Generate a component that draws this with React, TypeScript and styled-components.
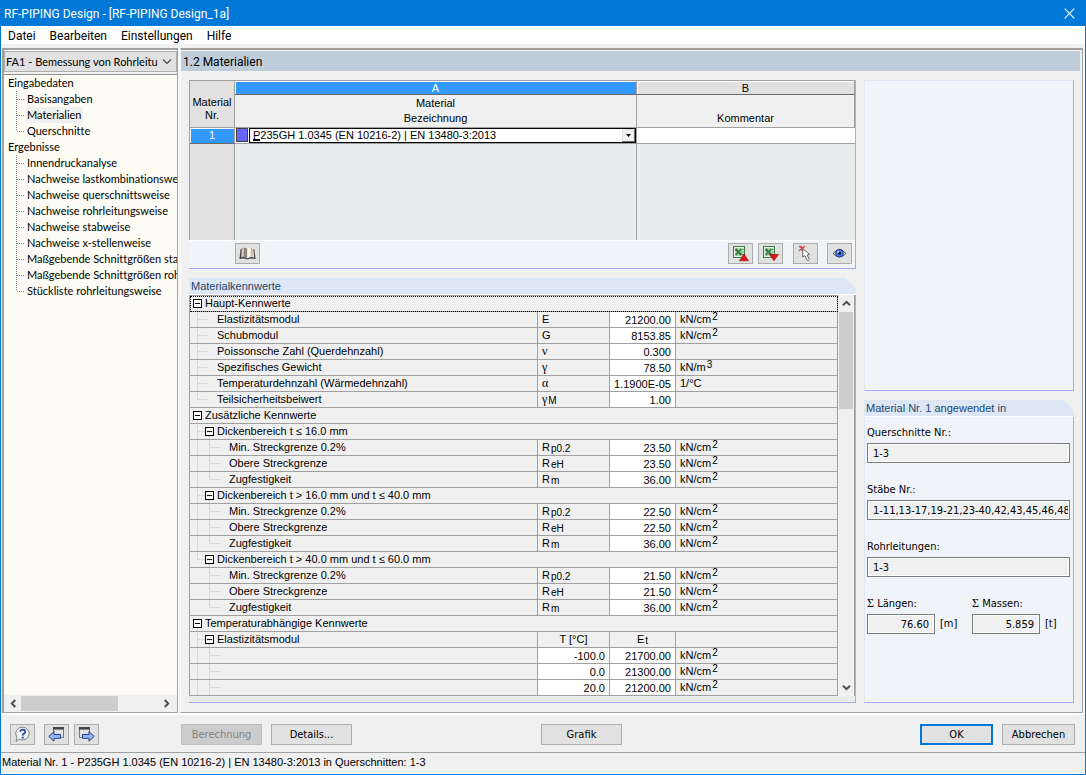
import React from "react";
import styled, { createGlobalStyle, css } from "styled-components";

const SYSTEM = '"DejaVu Sans Condensed", "DejaVu Sans", sans-serif';
const TREE = 'Lato, "Open Sans", sans-serif';
const GRID = '"Liberation Sans", Arial, sans-serif';
const CAPTION = 'Roboto, "Open Sans", sans-serif';
const SYMBOL = '"Liberation Serif", "Times New Roman", serif';

const GlobalStyle = createGlobalStyle`
  *, *::before, *::after { box-sizing: border-box; }
  body { margin: 0; background: #f0f0f0; color: #000; font: 11px/14px ${SYSTEM}; }
  button, select, input { font: inherit; color: inherit; margin: 0; padding: 0; border-radius: 0; }
  svg { display: block; flex: none; }
`;

/* ---------- window frame ---------- */

const Window = styled.div`
  display: flex;
  flex-direction: column;
  min-height: 100vh;
  border: 1px solid #0078d7;
  background: #f0f0f0;
`;

const TitleBar = styled.header`
  display: flex;
  align-items: center;
  justify-content: space-between;
  height: 25px;
  padding: 0 8px 0 3px;
  background: #0078d7;
  color: #fff;
  font: 12px/16px ${CAPTION};
`;

const CloseButton = styled.button`
  border: 0;
  padding: 2px;
  background: none;
`;

const MenuBar = styled.nav`
  display: flex;
  gap: 14px;
  height: 18px;
  margin-bottom: 4px;
  padding: 1px 7px 0;
  background: #fff;
  font: 12px/18px ${CAPTION};
`;

const MenuItem = styled.button`
  border: 0;
  height: 18px;
  background: none;
`;

const Workspace = styled.div`
  flex: 1;
  display: grid;
  grid-template-columns: 176px minmax(0, 1fr);
  gap: 2px;
  padding: 0 2px 0 1px;
  border-bottom: 2px solid #fff;
`;

/* ---------- navigator ---------- */

const Navigator = styled.aside`
  display: flex;
  flex-direction: column;
  min-width: 0;
  border: 1px solid #a0a0a0;
  border-width: 2px 1px 1px 2px;
  background: #fcfcf5;
  box-shadow: 1px 0 #fff;
  font-family: ${TREE};
  font-variant-ligatures: none;
`;

const CaseSelectBox = styled.div`
  display: flex;
  align-items: center;
  margin-top: 1px;
  border: 1px solid #adadad;
  background: #e1e1e1;
  height: 21px;
  box-shadow: 0 2px #f0f0f0, 0 3px #8f8f8f;
  margin-bottom: 3px;
`;

const CaseSelect = styled.select`
  flex: 1;
  min-width: 0;
  height: 19px;
  padding: 0 0 0 1px;
  border: 0;
  appearance: none;
  background: none;
  overflow: hidden;
  white-space: nowrap;
`;

const Tree = styled.ul`
  flex: 1;
  margin: 0;
  padding: 0;
  list-style: none;
  overflow: hidden;

  ul { margin: 0; padding: 0 0 0 12px; list-style: none; }
`;

const TreeItem = styled.li`
  display: flex;
  height: 16px;
`;

const TreeLink = styled.a<{ $selected?: boolean }>`
  padding: 0 2px 0 1px;
  color: #000;
  line-height: 16px;
  white-space: nowrap;
  text-decoration: none;
  background: ${(p) => (p.$selected ? "#f0f0f0" : "transparent")};
`;

const TreeRoot = styled(TreeLink)`
  display: block;
  padding-left: 4px;
`;

const HScroll = styled.div`
  display: flex;
  align-items: center;
  height: 17px;
  padding: 0 3px 0 1px;
  background: #f0f0f0;
`;

const ScrollButton = styled.button`
  display: grid;
  place-items: center;
  border: 0;
  width: 16px;
  height: 15px;
  background: none;
`;

const HTrack = styled.div`
  flex: 1;
  height: 15px;
`;

const HThumb = styled.div`
  width: 71%;
  height: 15px;
  background: #cdcdcd;
`;

/* ---------- main area ---------- */

const Main = styled.main`
  display: flex;
  flex-direction: column;
  min-width: 0;
  border: 1px solid #a0a0a0;
  border-top-width: 2px;
  border-left-color: #fff;
  box-shadow: 1px 0 #fff;
`;

const PageTitle = styled.h1`
  margin: 1px 2px 9px 0;
  height: 20px;
  padding: 0 2px;
  background: #bfcddb;
  font: 12px/22px ${CAPTION};
`;

const Columns = styled.div`
  flex: 1;
  display: grid;
  grid-template-columns: minmax(0, 1fr) 210px;
  gap: 8px;
  padding: 0 8px 9px 8px;
`;

const Stack = styled.div`
  display: flex;
  flex-direction: column;
  gap: 9px;
  min-width: 0;
`;

const Panel = styled.section<{ $grow?: boolean }>`
  display: flex;
  flex-direction: column;
  border: 1px solid #a8a8ec;
  border-width: 0 1px 1px 0;
  background: #f0f4f9;
  ${(p) => p.$grow && css`flex: 1;`}
`;

const Preview = styled(Panel)`
  height: 311px;
  border-top: 1px solid #dce6f5;
  border-left: 1px solid #dce6f5;
`;

const TitledPanel = styled(Panel)`
  border-right-color: transparent;
  background: linear-gradient(#a8a8ec, #a8a8ec) right 10px / 1px 100% no-repeat border-box, #f0f4f9;
  background-origin: border-box;
`;

const PanelTitle = styled.h2`
  height: 17px;
  margin: 0 -1px 0 0;
  padding: 0 2px;
  border-bottom: 1px solid #fff;
  background: linear-gradient(45deg, #dce6f5 calc(100% - 8px), #f0f0f0 calc(100% - 7px));
  color: #1e466e;
  font: 11px/16px ${GRID};
`;

/* ---------- material table ---------- */

const MaterialTable = styled.table`
  width: 100%;
  table-layout: fixed;
  border-collapse: separate;
  border-spacing: 0;
  border: 1px solid #a0a0a0;
  border-width: 1px 0 0 1px;
  background: #f0f0f0;
  font: 11px/13px ${GRID};

  th, td { padding: 0; font-weight: normal; border-right: 1px solid #a0a0a0; }
  td:last-child { border-right: 0; }
`;

const CornerHead = styled.th`
  && { padding-top: 9px; }
  background: #e1e1e1;
  border-bottom: 1px solid #a0a0a0;
`;

const LetterHead = styled.th<{ $active?: boolean }>`
  height: 14px;
  line-height: 12px;
  border-bottom: 1px solid #696969;
  box-shadow: inset 1px 1px #fff;
  background: ${(p) => (p.$active ? "#3399ff" : "#e1e1e1")};
  color: ${(p) => (p.$active ? "#fff" : "#000")};
`;

const TextHead = styled.th`
  && { padding-bottom: 1px; }
  height: 33px;
  vertical-align: bottom;
  line-height: 15px;
  border-bottom: 1px solid #a0a0a0;
`;

const RowNumber = styled.th`
  height: 16px;
  background: #3399ff;
  color: #fff;
  border-bottom: 1px solid #696969;
  box-shadow: inset 1px 1px #fff;
`;

const EntryCell = styled.td`
  height: 16px;
  background: #fff;
  border-bottom: 1px solid #a0a0a0;
`;

const MaterialEntry = styled.div`
  position: relative;
  display: grid;
  grid-template-columns: 14px minmax(0, 1fr);
  height: 15px;
`;

const Swatch = styled.span`
  height: 14px;
  margin: 0 1px;
  border: 1px solid #404040;
  background: #6666ff;
`;

const MaterialSelectBox = styled.div`
  display: flex;
  align-items: center;
  height: 15px;
  border: 1px solid #000;
  background: #fff;
`;

const MaterialSelect = styled.select`
  flex: 1;
  min-width: 0;
  height: 13px;
  padding-left: 3px;
  border: 0;
  appearance: none;
  background: none;
  line-height: 13px;
`;

const DropArrow = styled.span`
  display: grid;
  place-items: center;
  width: 13px;
  height: 13px;
  border: 1px solid #e3e3e3;
  border-right-color: #696969;
  border-bottom-color: #696969;
  background: #f0f0f0;
`;

const Caret = styled.span`
  position: absolute;
  left: 18px;
  bottom: 2px;
  width: 7px;
  height: 2px;
  background: #000;
`;

const CommentInput = styled.input`
  display: block;
  width: 100%;
  height: 15px;
  border: 0;
  background: #fff;
`;

const EmptyCell = styled.td<{ $head?: boolean }>`
  height: 96px;
  background: ${(p) => (p.$head ? "#e1e1e1" : "#e8eeee")};
`;

const TableTools = styled.div`
  display: flex;
  gap: 5px;
  height: 28px;
  padding: 2px 3px 0 46px;
  border-top: 1px solid #fff;
`;

const ToolGroup = styled.div<{ $gap: number; $end?: boolean }>`
  display: flex;
  gap: ${(p) => p.$gap}px;
  margin-left: ${(p) => (p.$end ? "auto" : "0")};

  & + & { margin-left: ${(p) => (p.$end ? "auto" : "5px")}; }
`;

const IconButton = styled.button`
  display: grid;
  place-items: center;
  width: 25px;
  height: 21px;
  border: 1px solid #adadad;
  background: #e1e1e1;
`;

/* ---------- property grid ---------- */

const GridArea = styled.div`
  flex: 1;
  display: flex;
  padding-bottom: 6px;
  background: linear-gradient(#e8eeee, #e8eeee) bottom / 100% 6px no-repeat;
`;

const PropertyTable = styled.table`
  flex: 1;
  width: 100%;
  table-layout: fixed;
  border-collapse: separate;
  border-spacing: 0;
  border: 1px solid #a0a0a0;
  border-width: 1px 0 0 1px;
  background: #f0f0f0;
  font: 11px/15px ${GRID};

  td, th {
    height: 16px;
    padding: 0;
    font-weight: normal;
    text-align: left;
    white-space: nowrap;
    border-right: 1px solid #a0a0a0;
    border-bottom: 1px solid #a0a0a0;
  }
  tr > th[data-focus] { outline: 1px dotted #000; outline-offset: -1px; }
`;

const LabelBox = styled.div`
  display: flex;
  gap: 2px;
  height: 15px;
  padding-left: 1px;
`;

const TextCell = styled.td`
  && { padding-left: 4px; }
`;

const HeadCell = styled.td`
  && { text-align: center; }
`;

const ValueCell = styled.td`
  && {
    padding: 1px 4px 0 0;
    text-align: right;
    background: #fff;
    line-height: 14px;
  }
`;

const Sub = styled.sub`
  font-size: 10px;
  line-height: 0;
  vertical-align: -1px;
  margin-left: 1px;
`;

const Sup = styled.sup`
  font-size: 10px;
  line-height: 0;
  vertical-align: 3px;
  margin-left: 1px;
`;

const Greek = styled.span`
  font-family: ${SYMBOL};
  font-size: 12px;
  line-height: 0;
`;

const VScroll = styled.div`
  display: flex;
  flex-direction: column;
  width: 17px;
  padding: 0 1px;
  border-right: 1px solid #a0a0a0;
  background: #f0f0f0;
`;

const VButton = styled(ScrollButton)`
  width: 15px;
  height: 17px;
`;

const VTrack = styled.div`
  flex: 1;
`;

const VThumb = styled.div`
  height: 97px;
  background: #cdcdcd;
`;

/* ---------- usage panel ---------- */

const UsageForm = styled.div`
  flex: 1;
  display: flex;
  flex-direction: column;
  gap: 20px;
  padding: 9px 3px 0 2px;
  border-left: 1px solid #dce6f5;
`;

const Field = styled.div`
  display: flex;
  flex-direction: column;
  gap: 3px;
`;

const FieldPair = styled.div`
  display: grid;
  grid-template-columns: 105px 1fr;
`;

const FieldLine = styled.div`
  display: flex;
  align-items: center;
  gap: 5px;
`;

const ReadOnly = styled.input<{ $small?: boolean }>`
  width: ${(p) => (p.$small ? "68px" : "100%")};
  height: 20px;
  padding: ${(p) => (p.$small ? "0 5px" : "0 1px 0 5px")};
  border: 1px solid #7a7a7a;
  box-shadow: inset 0 0 0 1px #fff;
  background: #f0f0f0;
  text-align: ${(p) => (p.$small ? "right" : "left")};
`;

/* ---------- bottom ---------- */

const CommandBar = styled.footer`
  display: flex;
  align-items: flex-start;
  gap: 9px;
  height: 37px;
  padding: 9px 10px 0 9px;
`;

const CommandButton = styled.button`
  width: 81px;
  height: 21px;
  border: 1px solid #adadad;
  background: #e1e1e1;

  &:disabled { background: #cccccc; border-color: #bfbfbf; color: #838383; }
`;

const IconStrip = styled.div`
  display: flex;
  gap: 5px;
  width: 162px;
`;

const HelpSlot = styled.div`
  margin-right: 4px;
`;

const GraphicSlot = styled.div`
  margin-left: 180px;
`;

const DialogActions = styled.div`
  display: flex;
  gap: 9px;
  margin-left: auto;
`;

const DialogButton = styled(CommandButton)<{ $primary?: boolean }>`
  width: 73px;
  ${(p) => p.$primary && css`border: 2px solid #0078d7;`}
`;

const StatusBar = styled.div`
  height: 22px;
  border-top: 1px solid #a0a0a0;
  border-bottom: 1px solid #fff;
  padding-left: 1px;
  font: 11px/19px ${GRID};
  white-space: nowrap;
  overflow: hidden;
`;

/* ---------- drawings ---------- */

const Chevron = ({ dir }: { dir: "up" | "down" | "left" | "right" }) => {
  const turn = { up: 0, right: 90, down: 180, left: 270 }[dir];
  return (
    <svg width="9" height="9" viewBox="0 0 9 9">
      <path d="M1 6.3 4.5 2.8 8 6.3" fill="none" stroke="#505050" strokeWidth="2" transform={`rotate(${turn} 4.5 4.5)`} />
    </svg>
  );
};

const TreeConnector = ({ last }: { last?: boolean }) => (
  <svg width="10" height="16" viewBox="0 0 10 16">
    <path d={last ? "M.5 0V8" : "M.5 0V16"} stroke="#808080" strokeDasharray="1 1" />
    <path d="M1 8.5H9" stroke="#808080" strokeDasharray="1 1" />
  </svg>
);

const BookIcon = () => (
  <svg width="17" height="15" viewBox="0 0 17 15">
    <path d="M1.6 3 .4 13Q5 11.8 8.5 13.6 12 11.8 16.6 13L15.2 3Z" fill="#43434f" />
    <path d="M2.6 2.8Q5.6 .8 8.3 3V12.4Q5 10.4 2 11.6Z" fill="#8d877c" />
    <path d="M3 3.4Q4 2.2 5 2.2L4.6 10.8 2.4 11Z" fill="#d4cfc3" />
    <path d="M8.3 3Q11 .6 14.2 2.6L15.2 11.4Q11.6 10.4 8.3 12.4Z" fill="#e9e0cb" />
    <path d="M8.3 3Q9.6 1.6 11.2 1.6L10.6 11 8.3 12.4Z" fill="#fff" />
    <path d="M12.4 2.2 13.2 10.8" stroke="#b3aa92" />
  </svg>
);

const ExcelIcon = ({ down }: { down?: boolean }) => (
  <svg width="17" height="17" viewBox="0 0 17 17">
    <rect x="1.5" y="1.5" width="11" height="11" fill="#e4f0e4" stroke="#3d7f44" />
    <rect x="3" y="3" width="8" height="8" fill="#b5d6b6" />
    <path d="m3.6 4 5.8 6" stroke="#2f7437" strokeWidth="2.4" />
    <path d="M9.4 4 3.6 10" stroke="#3d8a45" strokeWidth="1.8" />
    <path d="M10 4.5h2M10 7h2M10 9.5h2" stroke="#6ca572" />
    {down ? (
      <path d="M7.5 9.5h9L12 15.8z" fill="#e0151b" stroke="#8c0a0e" strokeWidth=".6" />
    ) : (
      <path d="M7.5 15.8h9L12 8.8z" fill="#e0151b" stroke="#8c0a0e" strokeWidth=".6" />
    )}
  </svg>
);

const PickIcon = () => (
  <svg width="17" height="17" viewBox="0 0 17 17">
    <path d="m2 1 5.5 5M8 1 2 5.8M4 .8 5.5 6" stroke="#dd4448" strokeWidth="1.4" />
    <path d="M5.8 3.6V12l2-1.4 2.4 4.8q1.4.6 2.2-.8L10.2 10l2.4-.6z" fill="#fff" stroke="#555" strokeWidth=".9" />
  </svg>
);

const EyeIcon = () => (
  <svg width="15" height="13" viewBox="0 0 15 13">
    <path d="M1 6.5Q7.5-1 14 6.5 7.5 13.4 1 6.5Z" fill="#e9eaee" stroke="#444" strokeWidth=".9" />
    <circle cx="7.5" cy="6.2" r="3.9" fill="#4a74e8" stroke="#1d3180" strokeWidth=".8" />
    <circle cx="7.5" cy="6.2" r="1.4" fill="#0a0f2e" />
    <circle cx="6.2" cy="4.8" r="1" fill="#c9d8ff" />
  </svg>
);

const HelpIcon = () => (
  <svg width="17" height="17" viewBox="0 0 17 17">
    <path d="M8.8 1.2a6.6 6.4 0 1 1-3.4 12L2 15.4l1-4A6.6 6.4 0 0 1 8.8 1.2Z" fill="#f2f4f8" stroke="#7f848c" />
    <path d="M6.3 5.8Q6.4 3.6 8.8 3.6 11.3 3.7 11.2 5.7 11.1 7 9.6 7.8 8.8 8.3 8.7 9.6" fill="none" stroke="#2d4f9c" strokeWidth="1.9" />
    <path d="M7.7 10.7h2v1.9h-2z" fill="#2d4f9c" />
  </svg>
);

const PageArrowIcon = ({ next }: { next?: boolean }) => (
  <svg width="17" height="17" viewBox="0 0 17 17">
    <g transform={next ? "translate(17 0) scale(-1 1)" : undefined}>
      <rect x="5.5" y="1.5" width="10" height="10" fill="#dfe1e6" stroke="#77797f" />
      <path d="M5 1h11v2.6H5z" fill="#44464e" />
      <path d="M.8 10.4 6 5.6v2.9h6.5v3.8H6v2.9z" fill="#8fb8f4" stroke="#1e3f94" />
    </g>
  </svg>
);

/* Guide lines and the expander box in front of a property label; one 12px slot per level. */
const Guides = ({ row }: { row: Row }) => {
  const { depth, group, last, open } = row;
  const at = depth * 12 + 6.5;
  const parent = at - 12;
  return (
    <svg width={(depth + 1) * 12} height="15" viewBox={`0 0 ${(depth + 1) * 12} 15`}>
      <g stroke="#d9d9d9" fill="none">
        {depth > 0 && <path d={`M${parent} 0V${last ? 8 : 15}M${parent} 7.5H${group ? parent + 8 : parent + 11}`} />}
        {depth > 1 && open && <path d="M6.5 0V15" />}
        {group && <path d={`M${at} 12V15`} />}
      </g>
      {group && (
        <>
          <rect x={at - 4} y="3.5" width="8" height="8" fill="#fff" stroke="#000" />
          <path d={`M${at - 2.5} 7.5h5`} stroke="#000" />
        </>
      )}
    </svg>
  );
};

/* ---------- data ---------- */

interface Row {
  depth: number;
  label: string;
  group?: boolean;
  last?: boolean;
  open?: boolean;
  focus?: boolean;
  head?: boolean;
  symbol?: React.ReactNode;
  temp?: string;
  value?: string;
  unit?: React.ReactNode;
}

const perCm2 = <>kN/cm<Sup>2</Sup></>;

const strengths = (yieldValue: string, open: boolean): Row[] => [
  { depth: 2, open, label: "Min. Streckgrenze 0.2%", symbol: <>R<Sub>p0.2</Sub></>, value: yieldValue, unit: perCm2 },
  { depth: 2, open, label: "Obere Streckgrenze", symbol: <>R<Sub>eH</Sub></>, value: yieldValue, unit: perCm2 },
  { depth: 2, open, last: true, label: "Zugfestigkeit", symbol: <>R<Sub>m</Sub></>, value: "36.00", unit: perCm2 },
];

const rows: Row[] = [
  { depth: 0, group: true, focus: true, label: "Haupt-Kennwerte" },
  { depth: 1, label: "Elastizitätsmodul", symbol: "E", value: "21200.00", unit: perCm2 },
  { depth: 1, label: "Schubmodul", symbol: "G", value: "8153.85", unit: perCm2 },
  { depth: 1, label: "Poissonsche Zahl (Querdehnzahl)", symbol: <Greek>ν</Greek>, value: "0.300" },
  { depth: 1, label: "Spezifisches Gewicht", symbol: <Greek>γ</Greek>, value: "78.50", unit: <>kN/m<Sup>3</Sup></> },
  { depth: 1, label: "Temperaturdehnzahl (Wärmedehnzahl)", symbol: <Greek>α</Greek>, value: "1.1900E-05", unit: "1/°C" },
  { depth: 1, last: true, label: "Teilsicherheitsbeiwert", symbol: <><Greek>γ</Greek><Sub>M</Sub></>, value: "1.00" },
  { depth: 0, group: true, label: "Zusätzliche Kennwerte" },
  { depth: 1, group: true, label: "Dickenbereich t ≤ 16.0 mm" },
  ...strengths("23.50", true),
  { depth: 1, group: true, label: "Dickenbereich t > 16.0 mm und t ≤ 40.0 mm" },
  ...strengths("22.50", true),
  { depth: 1, group: true, last: true, label: "Dickenbereich t > 40.0 mm und t ≤ 60.0 mm" },
  ...strengths("21.50", false),
  { depth: 0, group: true, label: "Temperaturabhängige Kennwerte" },
  { depth: 1, group: true, head: true, label: "Elastizitätsmodul" },
  { depth: 2, open: true, label: "", temp: "-100.0", value: "21700.00", unit: perCm2 },
  { depth: 2, open: true, label: "", temp: "0.0", value: "21300.00", unit: perCm2 },
  { depth: 2, open: true, label: "", temp: "20.0", value: "21200.00", unit: perCm2 },
];

const tree = [
  { title: "Eingabedaten", items: ["Basisangaben", "Materialien", "Querschnitte"] },
  {
    title: "Ergebnisse",
    items: [
      "Innendruckanalyse",
      "Nachweise lastkombinationsweise",
      "Nachweise querschnittsweise",
      "Nachweise rohrleitungsweise",
      "Nachweise stabweise",
      "Nachweise x-stellenweise",
      "Maßgebende Schnittgrößen stabweise",
      "Maßgebende Schnittgrößen rohrleitungsweise",
      "Stückliste rohrleitungsweise",
    ],
  },
];

const PropertyRow = ({ row }: { row: Row }) => {
  const label = (
    <LabelBox>
      <Guides row={row} />
      <span>{row.label}</span>
    </LabelBox>
  );
  if (row.group && !row.head) {
    return (
      <tr>
        <th colSpan={4} scope="rowgroup" data-focus={row.focus || undefined}>{label}</th>
      </tr>
    );
  }
  return (
    <tr>
      <th scope="row">{label}</th>
      {row.head ? (
        <>
          <HeadCell>T [°C]</HeadCell>
          <HeadCell>E<Sub>t</Sub></HeadCell>
        </>
      ) : (
        <>
          {row.temp ? <ValueCell>{row.temp}</ValueCell> : <TextCell>{row.symbol}</TextCell>}
          <ValueCell>{row.value}</ValueCell>
        </>
      )}
      <TextCell>{row.unit}</TextCell>
    </tr>
  );
};

export default function App() {
  return (
    <Window>
      <GlobalStyle />
      <TitleBar>
        <span>RF-PIPING Design - [RF-PIPING Design_1a]</span>
        <CloseButton aria-label="Schließen">
          <svg width="11" height="11" viewBox="0 0 11 11">
            <path d="m.7.7 9.6 9.6M10.3.7.7 10.3" stroke="#fff" strokeWidth="1.1" />
          </svg>
        </CloseButton>
      </TitleBar>
      <MenuBar>
        {["Datei", "Bearbeiten", "Einstellungen", "Hilfe"].map((m) => (
          <MenuItem key={m}>{m}</MenuItem>
        ))}
      </MenuBar>

      <Workspace>
        <Navigator>
          <CaseSelectBox>
            <CaseSelect aria-label="Bemessungsfall">
              <option>FA1 - Bemessung von Rohrleitu</option>
            </CaseSelect>
            <svg width="18" height="9" viewBox="0 0 18 9">
              <path d="m5 2.5 4 4 4-4" fill="none" stroke="#444" strokeWidth="1.1" />
            </svg>
          </CaseSelectBox>
          <Tree>
            {tree.map((branch) => (
              <li key={branch.title}>
                <TreeRoot href="#">{branch.title}</TreeRoot>
                <ul>
                  {branch.items.map((item, i) => (
                    <TreeItem key={item}>
                      <TreeConnector last={i === branch.items.length - 1} />
                      <TreeLink href="#" $selected={item === "Materialien"}>{item}</TreeLink>
                    </TreeItem>
                  ))}
                </ul>
              </li>
            ))}
          </Tree>
          <HScroll>
            <ScrollButton aria-label="Nach links"><Chevron dir="left" /></ScrollButton>
            <HTrack><HThumb /></HTrack>
            <ScrollButton aria-label="Nach rechts"><Chevron dir="right" /></ScrollButton>
          </HScroll>
        </Navigator>

        <Main>
          <PageTitle>1.2 Materialien</PageTitle>
          <Columns>
            <Stack>
              <Panel>
                <MaterialTable>
                  <colgroup>
                    <col style={{ width: 45 }} />
                    <col />
                    <col style={{ width: 218 }} />
                  </colgroup>
                  <thead>
                    <tr>
                      <CornerHead rowSpan={2}>Material<br />Nr.</CornerHead>
                      <LetterHead $active>A</LetterHead>
                      <LetterHead>B</LetterHead>
                    </tr>
                    <tr>
                      <TextHead>Material<br />Bezeichnung</TextHead>
                      <TextHead>Kommentar</TextHead>
                    </tr>
                  </thead>
                  <tbody>
                    <tr>
                      <RowNumber scope="row">1</RowNumber>
                      <EntryCell>
                        <MaterialEntry>
                          <Swatch />
                          <MaterialSelectBox>
                            <MaterialSelect aria-label="Material Bezeichnung">
                              <option>P235GH 1.0345 (EN 10216-2) | EN 13480-3:2013</option>
                            </MaterialSelect>
                            <DropArrow>
                              <svg width="7" height="4" viewBox="0 0 7 4"><path d="M1 0h5L3.5 3z" fill="#000" /></svg>
                            </DropArrow>
                          </MaterialSelectBox>
                          <Caret />
                        </MaterialEntry>
                      </EntryCell>
                      <EntryCell><CommentInput aria-label="Kommentar" /></EntryCell>
                    </tr>
                    <tr>
                      <EmptyCell $head />
                      <EmptyCell />
                      <EmptyCell />
                    </tr>
                  </tbody>
                </MaterialTable>
                <TableTools>
                  <IconButton aria-label="Materialbibliothek"><BookIcon /></IconButton>
                  <ToolGroup $gap={5} $end>
                    <IconButton aria-label="Excel-Export"><ExcelIcon /></IconButton>
                    <IconButton aria-label="Excel-Import"><ExcelIcon down /></IconButton>
                  </ToolGroup>
                  <ToolGroup $gap={9}>
                    <IconButton aria-label="Auswählen"><PickIcon /></IconButton>
                    <IconButton aria-label="Ansicht"><EyeIcon /></IconButton>
                  </ToolGroup>
                </TableTools>
              </Panel>

              <TitledPanel $grow>
                <PanelTitle>Materialkennwerte</PanelTitle>
                <GridArea>
                  <PropertyTable>
                    <colgroup>
                      <col />
                      <col style={{ width: 72 }} />
                      <col style={{ width: 66 }} />
                      <col style={{ width: 162 }} />
                    </colgroup>
                    <tbody>
                      {rows.map((row, i) => <PropertyRow key={i} row={row} />)}
                    </tbody>
                  </PropertyTable>
                  <VScroll>
                    <VButton aria-label="Nach oben"><Chevron dir="up" /></VButton>
                    <VTrack><VThumb /></VTrack>
                    <VButton aria-label="Nach unten"><Chevron dir="down" /></VButton>
                  </VScroll>
                </GridArea>
              </TitledPanel>
            </Stack>

            <Stack>
              <Preview />
              <TitledPanel $grow>
                <PanelTitle>Material Nr. 1 angewendet in</PanelTitle>
                <UsageForm>
                  <Field>
                    <label htmlFor="sections">Querschnitte Nr.:</label>
                    <ReadOnly id="sections" readOnly value="1-3" />
                  </Field>
                  <Field>
                    <label htmlFor="members">Stäbe Nr.:</label>
                    <ReadOnly id="members" readOnly value="1-11,13-17,19-21,23-40,42,43,45,46,48" />
                  </Field>
                  <Field>
                    <label htmlFor="pipelines">Rohrleitungen:</label>
                    <ReadOnly id="pipelines" readOnly value="1-3" />
                  </Field>
                  <FieldPair>
                    <Field>
                      <label htmlFor="lengths"><Greek>Σ</Greek> Längen:</label>
                      <FieldLine><ReadOnly id="lengths" $small readOnly value="76.60" />[m]</FieldLine>
                    </Field>
                    <Field>
                      <label htmlFor="masses"><Greek>Σ</Greek> Massen:</label>
                      <FieldLine><ReadOnly id="masses" $small readOnly value="5.859" />[t]</FieldLine>
                    </Field>
                  </FieldPair>
                </UsageForm>
              </TitledPanel>
            </Stack>
          </Columns>
        </Main>
      </Workspace>

      <CommandBar>
        <IconStrip>
          <HelpSlot><IconButton aria-label="Hilfe"><HelpIcon /></IconButton></HelpSlot>
          <IconButton aria-label="Vorherige Maske"><PageArrowIcon /></IconButton>
          <IconButton aria-label="Nächste Maske"><PageArrowIcon next /></IconButton>
        </IconStrip>
        <CommandButton disabled>Berechnung</CommandButton>
        <CommandButton>Details...</CommandButton>
        <GraphicSlot><CommandButton>Grafik</CommandButton></GraphicSlot>
        <DialogActions>
          <DialogButton $primary>OK</DialogButton>
          <DialogButton>Abbrechen</DialogButton>
        </DialogActions>
      </CommandBar>
      <StatusBar>Material Nr. 1 - P235GH 1.0345 (EN 10216-2) | EN 13480-3:2013 in Querschnitten: 1-3</StatusBar>
    </Window>
  );
}
